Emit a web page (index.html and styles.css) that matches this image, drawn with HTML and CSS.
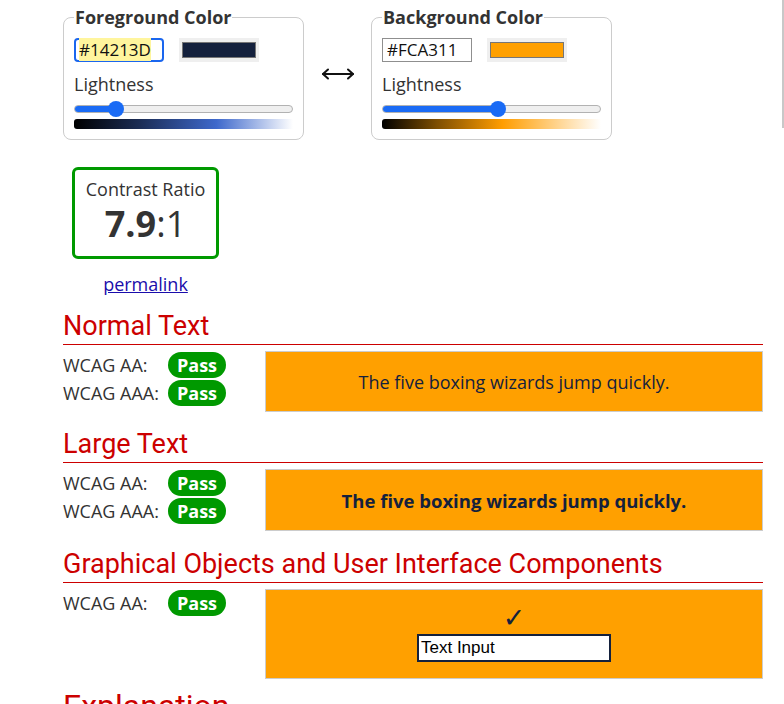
FILE: index.html
```html
<!DOCTYPE html>
<html lang="en">
<head>
<meta charset="utf-8">
<title>Contrast Checker</title>
<link rel="stylesheet" href="styles.css">
</head>
<body>
<div class="page">
  <div class="top">
    <fieldset class="picker">
      <legend>Foreground Color</legend>
      <div class="inputs">
        <div class="hex focus"><span class="sel">#14213D</span></div>
        <div class="swatch"><div class="chip chip-fg"></div></div>
      </div>
      <div class="label">Lightness</div>
      <div class="slider">
        <div class="track"><div class="fill" style="width:19%"></div></div>
        <div class="thumb" style="left:19%"></div>
      </div>
      <div class="grad grad-fg"></div>
    </fieldset>
    <div class="swap">
      <svg width="34" height="12" viewBox="0 0 34 12" fill="none" stroke="#111" stroke-width="2" stroke-linecap="round" stroke-linejoin="round"><path d="M2 6H32"/><path d="M7 1.5L2 6L7 10.5"/><path d="M27 1.5L32 6L27 10.5"/></svg>
    </div>
    <fieldset class="picker">
      <legend>Background Color</legend>
      <div class="inputs">
        <div class="hex"><span>#FCA311</span></div>
        <div class="swatch"><div class="chip chip-bg"></div></div>
      </div>
      <div class="label">Lightness</div>
      <div class="slider">
        <div class="track"><div class="fill" style="width:53%"></div></div>
        <div class="thumb" style="left:53%"></div>
      </div>
      <div class="grad grad-bg"></div>
    </fieldset>
    <div class="edge"></div>
  </div>

  <div class="ratio-wrap">
    <div class="ratio">
      <div class="ratio-label">Contrast Ratio</div>
      <div class="ratio-value"><b>7.9</b>:1</div>
    </div>
    <a class="permalink" href="#">permalink</a>
  </div>

  <div class="sections">
    <section class="section first">
      <h2>Normal Text</h2>
      <div class="result">
        <div class="checks">
          <div class="check-row"><span class="lvl">WCAG AA:</span><span class="pass">Pass</span></div>
          <div class="check-row"><span class="lvl">WCAG AAA:</span><span class="pass">Pass</span></div>
        </div>
        <div class="sample normal">The five boxing wizards jump quickly.</div>
      </div>
    </section>

    <section class="section">
      <h2>Large Text</h2>
      <div class="result">
        <div class="checks">
          <div class="check-row"><span class="lvl">WCAG AA:</span><span class="pass">Pass</span></div>
          <div class="check-row"><span class="lvl">WCAG AAA:</span><span class="pass">Pass</span></div>
        </div>
        <div class="sample large">The five boxing wizards jump quickly.</div>
      </div>
    </section>

    <section class="section third">
      <h2>Graphical Objects and User Interface Components</h2>
      <div class="result">
        <div class="checks">
          <div class="check-row"><span class="lvl">WCAG AA:</span><span class="pass">Pass</span></div>
        </div>
        <div class="sample ui">
          <div class="tick">✓</div>
          <div class="textinput">Text Input</div>
        </div>
      </div>
    </section>

    <section class="section last">
      <h2 class="big">Explanation</h2>
    </section>
  </div>
</div>
</body>
</html>
```
FILE: styles.css
```css
html, body {
  margin: 0;
  padding: 0;
  background: #fff;
}
body {
  font-family: "Open Sans", "Noto Sans", sans-serif;
  color: #333;
  font-size: 18px;
  overflow: hidden;
}
.page {
  padding-left: 63px;
}

/* top pickers */
.top {
  display: flex;
  align-items: flex-start;
  padding-top: 5px;
}
.picker {
  box-sizing: border-box;
  width: 241px;
  margin: 0;
  padding: 9px 10px 10px 10px;
  border: 1px solid #ccc;
  border-radius: 8px;
  min-width: 0;
}
.picker legend {
  font-weight: 700;
  font-size: 18px;
  line-height: 24px;
  padding: 0 1px;
  color: #333;
}
.inputs {
  display: flex;
  align-items: center;
  gap: 15px;
}
.hex {
  box-sizing: border-box;
  width: 90px;
  height: 24px;
  border: 1px solid #8f8f8f;
  padding: 0 4px;
  font-size: 17px;
  line-height: 22px;
  color: #111;
  background: #fff;
}
.hex.focus {
  border: 2px solid #1a66ee;
  border-radius: 4px;
  padding: 0 3px;
  line-height: 20px;
}
.sel {
  background: #fff59d;
}
.swatch {
  box-sizing: border-box;
  width: 80px;
  height: 24px;
  padding: 4px 3px;
  background: #efefef;
}
.chip {
  box-sizing: border-box;
  height: 16px;
  border: 1px solid #767676;
}
.chip-fg { background: #14213D; }
.chip-bg { background: #ffa000; }
.label {
  margin-top: 10px;
  font-size: 18px;
  line-height: 24px;
  color: #333;
}
.slider {
  position: relative;
  height: 16px;
  margin-top: 5px;
}
.track {
  position: relative;
  top: 4px;
  box-sizing: border-box;
  height: 8px;
  border: 1px solid #b2b2b2;
  border-radius: 4px;
  background: #efefef;
  overflow: hidden;
}
.fill {
  height: 100%;
  background: #1a6bf5;
}
.thumb {
  position: absolute;
  top: 0;
  width: 16px;
  height: 16px;
  margin-left: -8px;
  border-radius: 50%;
  background: #1a6bf5;
}
.grad {
  height: 10px;
  margin-top: 2px;
  border-radius: 3px 0 0 3px;
}
.grad-fg {
  background: linear-gradient(to right, #000 0%, hsl(222, 51%, 22%) 30%, hsl(222, 58%, 52%) 65%, #fff 100%);
}
.grad-bg {
  background: linear-gradient(to right, #000 0%, hsl(37, 97%, 25%) 25%, hsl(37, 100%, 50%) 55%, #fff 100%);
}
.swap {
  display: flex;
  margin: 63px 16px 0 17px;
}
.edge {
  margin-left: auto;
  margin-top: -5px;
  width: 2px;
  height: 128px;
  background: #c8c8c8;
}

/* ratio */
.ratio-wrap {
  width: 147px;
  margin: 27px 0 0 9px;
  display: flex;
  flex-direction: column;
  align-items: center;
}
.ratio {
  box-sizing: border-box;
  width: 147px;
  height: 92px;
  border: 3px solid #090;
  border-radius: 6px;
  padding-top: 7px;
  text-align: center;
}
.ratio-label {
  font-size: 18px;
  line-height: 24px;
  color: #333;
}
.ratio-value {
  font-size: 36px;
  line-height: 46px;
  color: #333;
}
.ratio-value b {
  font-weight: 700;
}
.permalink {
  margin-top: 13px;
  font-size: 18px;
  line-height: 24px;
  color: #1a0dab;
}

/* sections */
.sections {
  width: 700px;
}
.section {
  margin-top: 17px;
}
.section.first {
  margin-top: 15px;
}
.section.third {
  margin-top: 18px;
}
.section.last {
  margin-top: 8px;
}
h2 {
  margin: 0;
  font-family: Roboto, "Liberation Sans", sans-serif;
  font-weight: 400;
  font-size: 27px;
  line-height: 30px;
  color: #c00;
  padding-bottom: 3px;
  border-bottom: 1px solid #c00;
}
h2.big {
  font-size: 32px;
  line-height: 38px;
}
.result {
  display: flex;
  margin-top: 6px;
}
.checks {
  width: 202px;
  flex: none;
}
.check-row {
  display: flex;
  align-items: center;
  height: 28px;
}
.lvl {
  width: 105px;
  font-size: 18px;
  color: #333;
}
.pass {
  box-sizing: border-box;
  width: 58px;
  height: 26px;
  line-height: 26px;
  border-radius: 13px;
  background: #090;
  color: #fff;
  font-weight: 700;
  font-size: 18px;
  text-align: center;
}
.sample {
  flex: 1;
  box-sizing: border-box;
  height: 62px;
  border: 1px solid #ccc;
  background: #ffa000;
  color: #14213D;
  font-size: 18px;
  display: flex;
  align-items: center;
  justify-content: center;
}
.sample.normal {
  height: 61px;
}
.sample.large {
  font-size: 18.5px;
  font-weight: 700;
}
.sample.ui {
  height: 90px;
  flex-direction: column;
}
.tick {
  font-family: "DejaVu Sans", sans-serif;
  font-size: 27px;
  line-height: 22px;
  color: #14213D;
}
.textinput {
  box-sizing: border-box;
  width: 194px;
  height: 28px;
  margin-top: 5px;
  border: 2px solid #14213D;
  background: #fff;
  padding: 0 2px;
  font-family: "Liberation Sans", Arial, sans-serif;
  font-size: 17px;
  line-height: 24px;
  color: #000;
}
```
